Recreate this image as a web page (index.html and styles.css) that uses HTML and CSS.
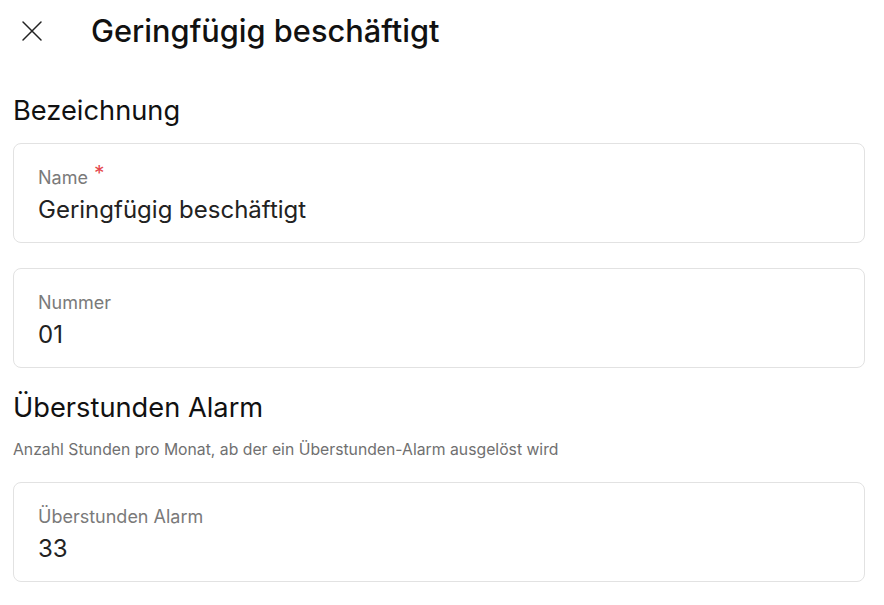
FILE: index.html
```html
<!DOCTYPE html>
<html lang="de">
<head>
    <meta charset="UTF-8">
    <meta name="viewport" content="width=device-width, initial-scale=1.0">
    <title>Geringfügig beschäftigt</title>
    <link rel="stylesheet" href="styles.css">
</head>
<body>
    <header class="top-bar">
        <button class="close-btn" aria-label="Schließen">
            <svg width="24" height="24" viewBox="0 0 24 24" fill="none" stroke="currentColor" stroke-width="1.5" stroke-linecap="round">
                <path d="M3 3 L21 21 M21 3 L3 21"/>
            </svg>
        </button>
        <h1 class="page-title">Geringfügig beschäftigt</h1>
    </header>

    <main class="form">
        <section class="form-section">
            <h2 class="section-title">Bezeichnung</h2>
            <div class="field">
                <label class="field-label" for="name">Name <span class="required">*</span></label>
                <input class="field-input" id="name" type="text" value="Geringfügig beschäftigt">
            </div>
            <div class="field">
                <label class="field-label" for="nummer">Nummer</label>
                <input class="field-input" id="nummer" type="text" value="01">
            </div>
        </section>

        <section class="form-section">
            <h2 class="section-title">Überstunden Alarm</h2>
            <p class="section-hint">Anzahl Stunden pro Monat, ab der ein Überstunden-Alarm ausgelöst wird</p>
            <div class="field">
                <label class="field-label" for="alarm">Überstunden Alarm</label>
                <input class="field-input" id="alarm" type="text" value="33">
            </div>
        </section>
    </main>
</body>
</html>
```

FILE: styles.css
```css
/* Reset */
* {
    margin: 0;
    padding: 0;
    box-sizing: border-box;
}

body {
    background: #ffffff;
    color: #111111;
    font-family: 'Inter', 'Noto Sans', Arial, sans-serif;
    padding: 0 19px 0 13px;
}

/* Header */
.top-bar {
    display: flex;
    align-items: center;
    height: 62px;
}

.close-btn {
    background: none;
    border: none;
    color: #222222;
    width: 36px;
    height: 36px;
    margin-left: 7px;
    display: flex;
    align-items: center;
    justify-content: flex-start;
    cursor: pointer;
}

.page-title {
    font-size: 30.75px;
    font-weight: 500;
    margin-left: 35px;
    line-height: 36px;
}

/* Sections */
.form-section {
    display: flex;
    flex-direction: column;
}

.form-section + .form-section {
    margin-top: 24px;
}

.form-section:first-child {
    margin-top: 33px;
}

.section-title {
    font-size: 27.25px;
    font-weight: 400;
    line-height: 32px;
    margin-bottom: 16px;
}

.section-hint {
    font-size: 15.75px;
    color: #707070;
    line-height: 20px;
    margin-bottom: 22px;
}

/* Fields */
.field {
    border: 1px solid #e2e2e2;
    border-radius: 8px;
    padding: 24px 24px 18px;
    display: flex;
    flex-direction: column;
    gap: 8px;
}

.field + .field {
    margin-top: 25px;
}

.field-label {
    font-size: 18px;
    line-height: 20px;
    color: #7a7a7a;
}

.required {
    display: inline-block;
    font-size: 21px;
    line-height: 0;
    color: #e5484d;
    margin-left: 1px;
    position: relative;
    top: -3px;
}

.field-input {
    border: none;
    outline: none;
    font-family: inherit;
    font-size: 24px;
    line-height: 28px;
    height: 28px;
    color: #222222;
    background: transparent;
    width: 100%;
}
```
